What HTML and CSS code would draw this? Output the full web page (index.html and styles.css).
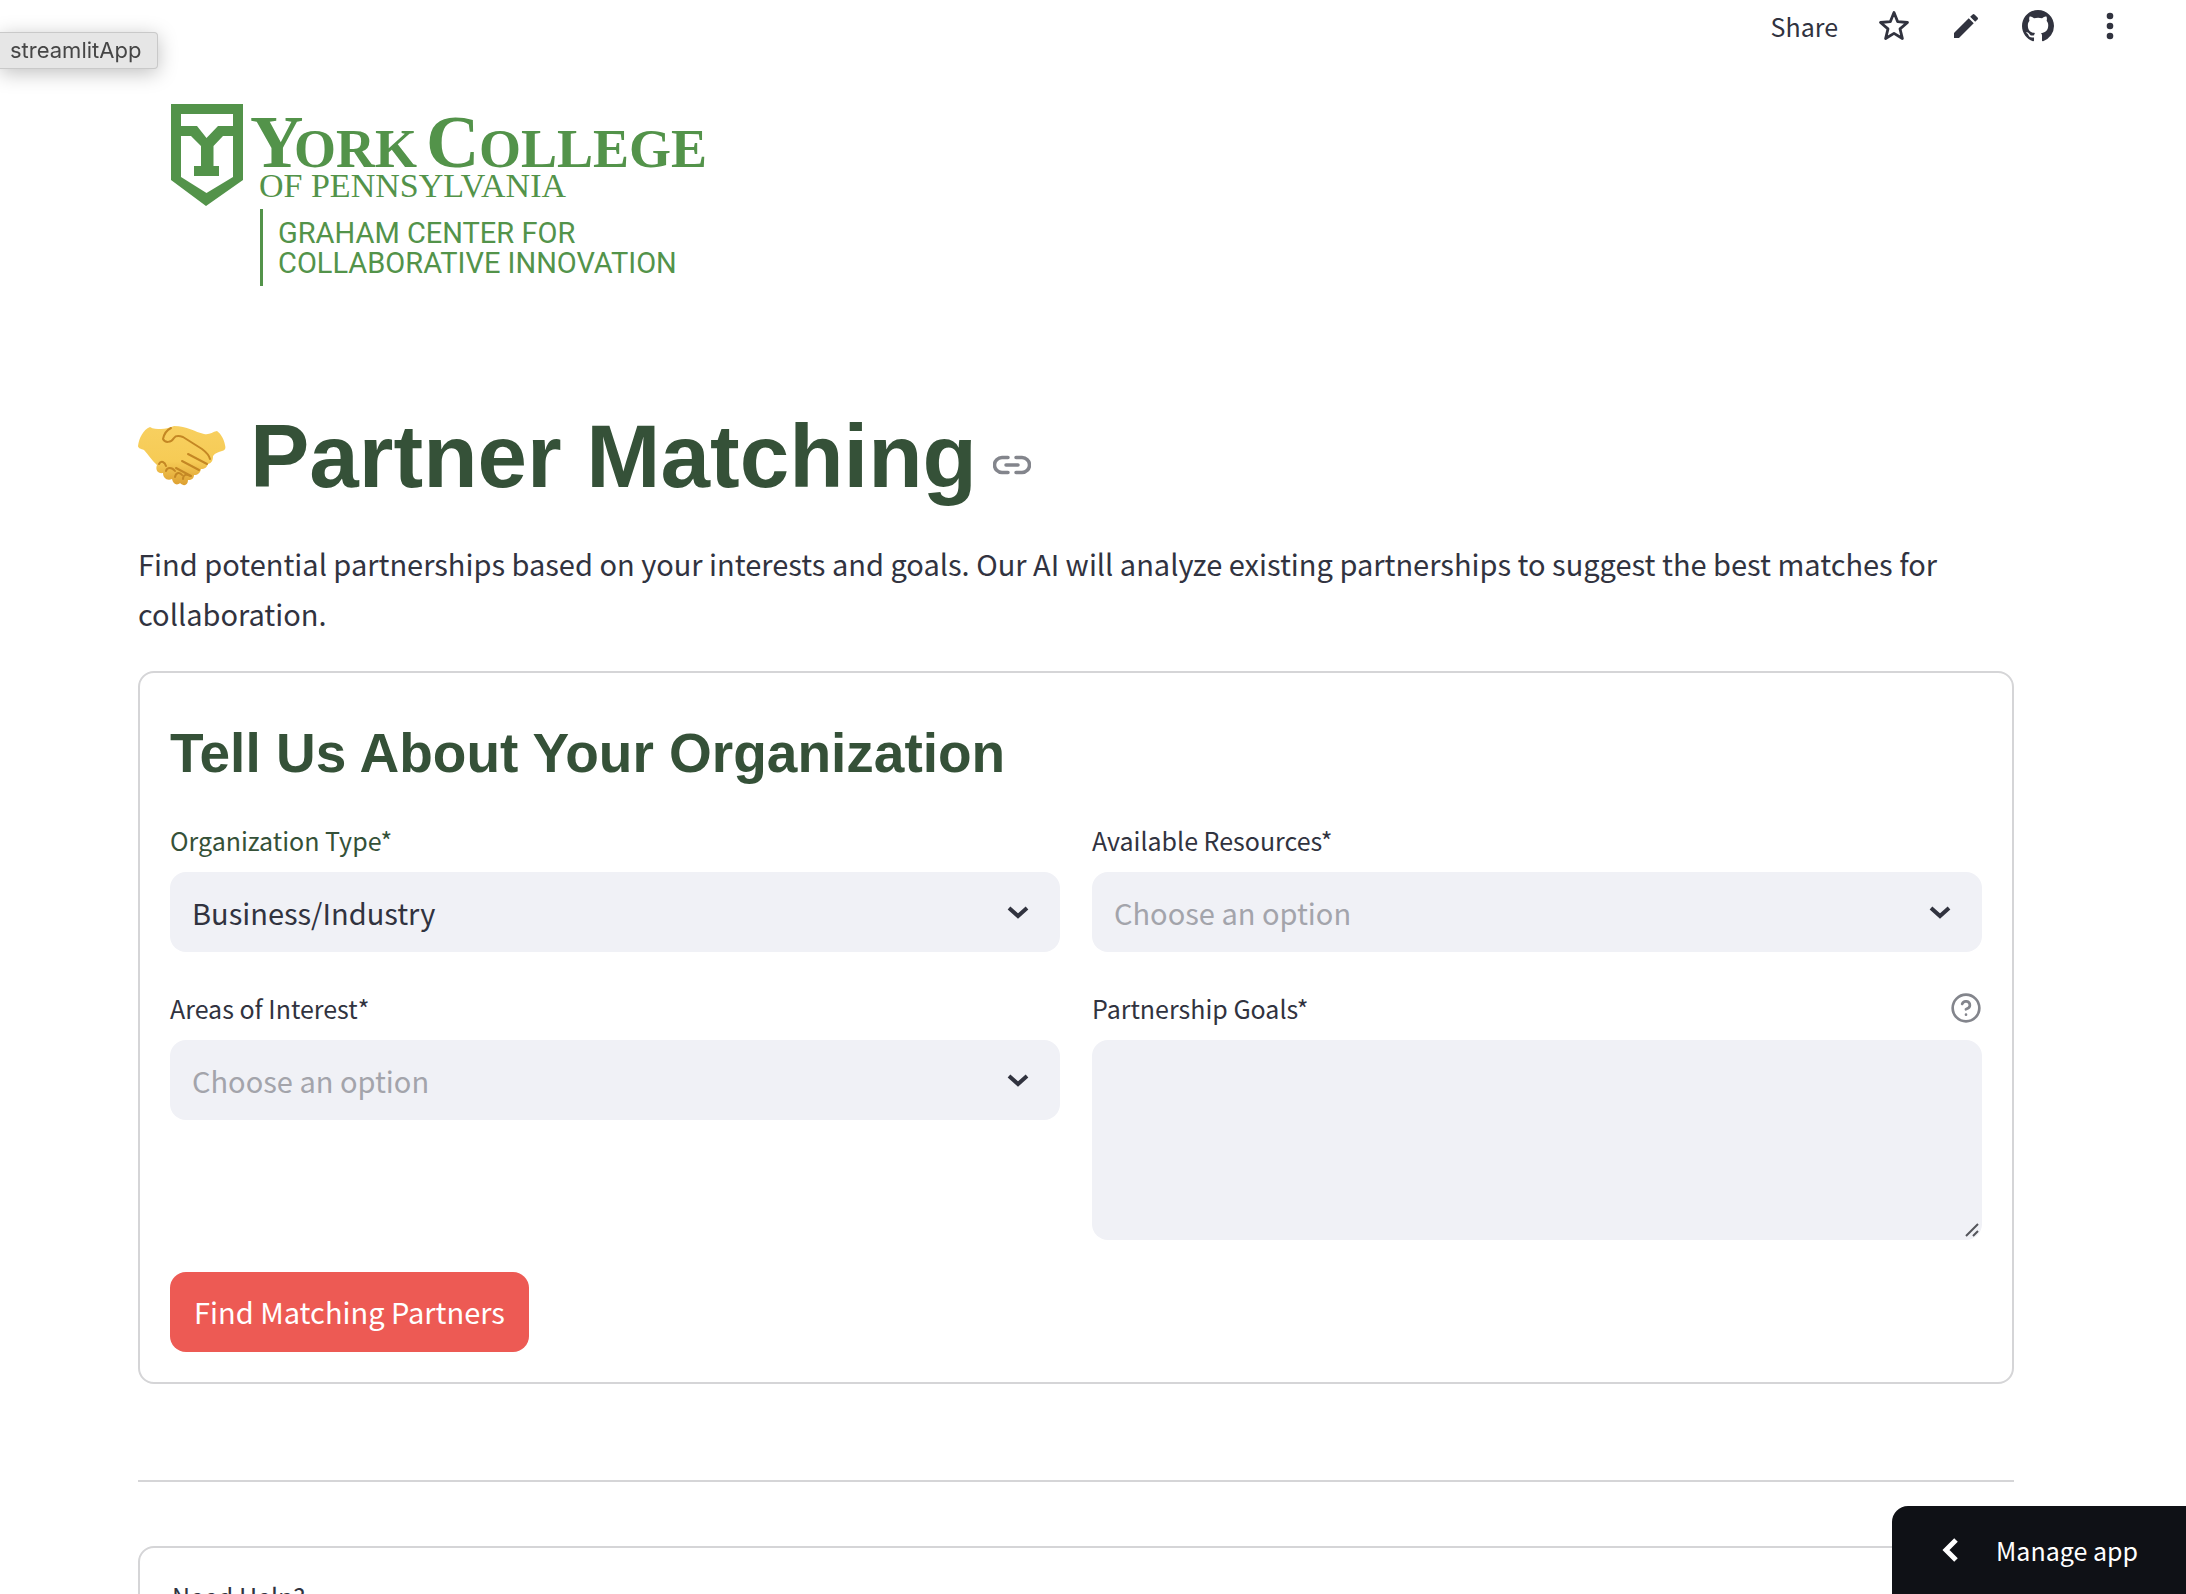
FILE: index.html
```html
<!DOCTYPE html>
<html lang="en">
<head>
<meta charset="utf-8">
<meta name="viewport" content="width=device-width, initial-scale=1">
<title>Partner Matching</title>
<link rel="stylesheet" href="styles.css">
</head>
<body>
<div class="app">
  <header class="toolbar">
    <button class="tool" type="button">Share</button>
    <button class="tool" type="button" aria-label="Favorite">
      <svg width="32" height="32" viewBox="0 0 32 32"><path d="M16 2.500 19.700 11.700 29.500 12.500 22 18.900 24.400 28.500 16 23.400 7.600 28.500 10 18.900 2.500 12.500 12.300 11.700Z" fill="none" stroke="currentColor" stroke-width="2.800" stroke-linejoin="round"/></svg>
    </button>
    <button class="tool" type="button" aria-label="Edit">
      <svg width="32" height="32" viewBox="0 0 24 24"><path d="M3 17.250V21h3.750L17.810 9.940l-3.750-3.750L3 17.250zM20.710 7.040a1 1 0 0 0 0-1.410l-2.340-2.340a1 1 0 0 0-1.410 0l-1.830 1.830 3.750 3.750 1.830-1.830z" fill="currentColor"/></svg>
    </button>
    <button class="tool" type="button" aria-label="View source">
      <svg width="32" height="32" viewBox="0 0 16 16"><path fill="currentColor" d="M8 0C3.580 0 0 3.580 0 8c0 3.540 2.290 6.530 5.470 7.590.4.070.55-.17.55-.38 0-.19-.01-.82-.01-1.490-2.010.37-2.530-.49-2.690-.94-.09-.23-.48-.94-.82-1.130-.28-.15-.68-.52-.01-.53.63-.01 1.080.58 1.230.82.72 1.210 1.870.87 2.330.66.07-.52.28-.87.51-1.070-1.780-.2-3.640-.89-3.640-3.950 0-.87.31-1.590.82-2.150-.08-.2-.36-1.020.08-2.120 0 0 .67-.21 2.200.82.64-.18 1.320-.27 2-.27s1.360.09 2 .27c1.530-1.040 2.200-.82 2.200-.82.44 1.100.16 1.920.08 2.120.51.56.82 1.270.82 2.150 0 3.070-1.870 3.750-3.650 3.950.29.25.54.73.54 1.480 0 1.070-.01 1.930-.01 2.200 0 .21.15.46.55.38A8.010 8.010 0 0 0 16 8c0-4.420-3.580-8-8-8z"/></svg>
    </button>
    <button class="tool" type="button" aria-label="Menu">
      <svg width="32" height="32" viewBox="0 0 32 32" fill="currentColor"><circle cx="16" cy="6" r="3.300"/><circle cx="16" cy="16" r="3.300"/><circle cx="16" cy="26" r="3.300"/></svg>
    </button>
  </header>

  <main class="content">
    <svg class="logo" width="560" height="184" viewBox="170 104 560 184" role="img" aria-label="York College of Pennsylvania, Graham Center for Collaborative Innovation">
      <path fill-rule="evenodd" d="M171 104H243V180L206 206 171 180ZM181 114V126H197L206.500 138 218 126H233V114ZM181 136V177L206.500 193 233 177V136H223L213.500 146V166H219V176H194V166H201V146L191 136Z"/>
      <text class="logo-serif" y="167"><tspan class="logo-cap" x="250">Y</tspan><tspan class="logo-small" x="294">ORK</tspan><tspan class="logo-cap" x="426">C</tspan><tspan class="logo-small" x="479">OLLEGE</tspan></text>
      <text class="logo-state" x="259" y="197">OF PENNSYLVANIA</text>
      <rect x="260" y="209" width="3" height="77"/>
      <text class="logo-center" x="278" y="243">GRAHAM CENTER FOR</text>
      <text class="logo-center" x="278" y="273">COLLABORATIVE INNOVATION</text>
    </svg>

    <h1 class="page-title" id="title">
      <svg width="88" height="60" viewBox="0 0 88 60" aria-hidden="true">
        <defs>
          <linearGradient id="skin" x1="0" y1="0" x2="0" y2="1"><stop offset="0" stop-color="#f8d060"/><stop offset=".6" stop-color="#f6cb55"/><stop offset="1" stop-color="#dda032"/></linearGradient>
        </defs>
        <path fill="url(#skin)" d="M12 1C5 4 1 12 0 20c0 2 3 3 6 4 4 4 8 11 13 15-2 5 1 9 6 8 0 5 4 8 9 6 1 5 5 7 8 4 4 4 8 2 8-3 4 0 6-2 6-5 4 0 6-2 7-6 4 0 6-2 7-5 4-1 5-4 5-8 2-3 6-4 9-5 3-1 4-2 3-6-1-6-4-11-8-14-5 1-7 4-13 3C57 6 49 0 36 0 31 2 27 3 23 3c-4 0-8 0-11-2Z"/>
        <path fill="none" stroke="#c48724" stroke-width="2" stroke-linecap="round" stroke-linejoin="round" d="M33 2c-4 2-7 6-8 11 2 4 8 4 11-1 2-3 6-2 9-1l19 12c4 3 7 6 8 10M50 28l19 10M44 35l17 9M38 42l15 8M21 38c2-4 6-2 7 2M28 45c1-4 6-4 9 0M37 51c1-5 5-5 7-2M45 53c0-5 4-5 7-3"/>
      </svg>
      <span>Partner Matching</span>
      <a class="anchor" href="#title" aria-label="Link to heading">
        <svg width="38" height="20" viewBox="0 0 38 20" fill="none" stroke="currentColor" stroke-width="3.500" stroke-linecap="round"><path d="M15 2.500H9a7.500 7.500 0 0 0 0 15h6M23 2.500h6a7.500 7.500 0 0 1 0 15h-6M13 10h12"/></svg>
      </a>
    </h1>

    <p class="intro">Find potential partnerships based on your interests and goals. Our AI will analyze existing partnerships to suggest the best matches for collaboration.</p>

    <form class="card">
      <h2 class="card-title">Tell Us About Your Organization</h2>
      <div class="fields">
        <div class="field">
          <div class="label-row"><label class="accent" for="org">Organization Type*</label></div>
          <div class="picker">
            <select id="org"><option>Business/Industry</option></select>
            <svg width="24" height="16" viewBox="0 0 24 16"><path d="M3 4l9 8 9-8"/></svg>
          </div>
        </div>
        <div class="field">
          <div class="label-row"><label for="resources">Available Resources*</label></div>
          <div class="picker">
            <select class="empty" id="resources"><option>Choose an option</option></select>
            <svg width="24" height="16" viewBox="0 0 24 16"><path d="M3 4l9 8 9-8"/></svg>
          </div>
        </div>
        <div class="field">
          <div class="label-row"><label for="areas">Areas of Interest*</label></div>
          <div class="picker">
            <select class="empty" id="areas"><option>Choose an option</option></select>
            <svg width="24" height="16" viewBox="0 0 24 16"><path d="M3 4l9 8 9-8"/></svg>
          </div>
        </div>
        <div class="field">
          <div class="label-row">
            <label for="goals">Partnership Goals*</label>
            <button class="help" type="button" aria-label="Help">
              <svg width="32" height="32" viewBox="0 0 24 24" fill="none" stroke="currentColor" stroke-width="2" stroke-linecap="round"><circle cx="12" cy="12" r="10"/><path d="M9.090 9a3 3 0 0 1 5.830 1c0 2-3 3-3 3M12 17h.01"/></svg>
            </button>
          </div>
          <div class="area">
            <textarea id="goals"></textarea>
            <svg width="16" height="16" viewBox="0 0 16 16"><path d="M2 14 14 2M9 14l5-5"/></svg>
          </div>
        </div>
      </div>
      <button class="submit" type="submit">Find Matching Partners</button>
    </form>

    <hr class="divider">

    <section class="card help-card"><p>Need Help?</p></section>
  </main>
</div>

<div class="status">streamlitApp</div>

<button class="manage" type="button">
  <svg width="16" height="24" viewBox="0 0 16 24"><path d="M14 2 4 12l10 10"/></svg>
  Manage app
</button>
</body>
</html>
```
FILE: styles.css
```css
* {
  box-sizing: border-box;
}

body {
  margin: 0;
  background: #fff;
  color: #31333f;
  font-family: "Noto Sans CJK SC", "Open Sans", sans-serif;
  font-size: 29px;
  line-height: 50px;
}

button,
select,
textarea {
  margin: 0;
  border: 0;
  color: inherit;
  font: inherit;
}

svg {
  display: block;
  flex: none;
}

.app {
  height: 100vh;
  overflow: auto;
  scrollbar-width: none;
}

.toolbar {
  display: flex;
  align-items: center;
  justify-content: flex-end;
  gap: 40px;
  height: 52px;
  padding-right: 60px;
}

.tool {
  padding: 0;
  background: none;
  font-size: 25px;
  line-height: 40px;
}

.content {
  padding: 52px 172px 64px 138px;
}

.logo {
  margin-left: 32px;
  fill: #53934a;
}

.logo-serif,
.logo-state {
  font-family: "Liberation Serif", serif;
}

.logo-serif {
  font-weight: 700;
}

.logo-cap {
  font-size: 74px;
}

.logo-small {
  font-size: 54px;
}

.logo-state {
  font-size: 34px;
}

.logo-center {
  font-family: Roboto, sans-serif;
  font-size: 29px;
}

.page-title {
  display: flex;
  align-items: center;
  gap: 16px;
  margin: 114px 0 28px;
  color: #355138;
  font: 700 89px/108px "Liberation Sans", sans-serif;
}

.page-title span {
  margin-left: 8px;
}

.anchor {
  margin-top: 18px;
  color: #83858c;
}

.intro {
  margin: 0 0 33px;
}

.card {
  padding: 30px;
  border: 2px solid #d5d5d7;
  border-radius: 16px;
}

.card-title {
  margin: 16px 0 33px;
  color: #355138;
  font: 700 55px/68px "Liberation Sans", sans-serif;
}

.fields {
  display: grid;
  grid-template-columns: 1fr 1fr;
  gap: 36px 32px;
}

.label-row {
  display: flex;
  align-items: center;
  justify-content: space-between;
  height: 40px;
  margin-bottom: 12px;
  font-size: 25px;
  line-height: 40px;
}

.accent {
  color: #355138;
}

.help {
  padding: 0;
  background: none;
  color: #83858c;
}

.picker,
.area {
  display: grid;
}

.picker > *,
.area > * {
  grid-area: 1 / 1;
}

.picker select {
  appearance: none;
  width: 100%;
  height: 80px;
  padding: 0 72px 0 22px;
  border-radius: 16px;
  background: #f0f1f6;
}

.picker .empty {
  color: #a3a4ab;
}

.picker svg,
.area svg {
  fill: none;
  pointer-events: none;
}

.picker svg {
  place-self: center end;
  margin-right: 30px;
  stroke: #31333f;
  stroke-width: 4;
}

.area textarea {
  width: 100%;
  height: 200px;
  padding: 16px 22px;
  border-radius: 16px;
  background: #f0f1f6;
  resize: none;
}

.area svg {
  place-self: end;
  margin: 2px;
  stroke: #55565c;
  stroke-width: 2;
}

.submit {
  height: 80px;
  margin-top: 32px;
  padding: 0 24px 2px;
  border-radius: 16px;
  background: #ed5a54;
  color: #fff;
}

.divider {
  height: 2px;
  margin: 96px 0 64px;
  border: 0;
  background: #d5d5d7;
}

.help-card {
  padding: 28px 32px;
}

.help-card p {
  margin: 0;
  font-size: 25px;
  line-height: 40px;
}

.status {
  position: fixed;
  top: 32px;
  left: 0;
  padding: 0 16px 0 10px;
  border: 1px solid #c9c9c9;
  border-left: 0;
  border-radius: 0 4px 4px 0;
  background: #e6e6e6;
  box-shadow: 0 4px 20px rgba(0, 0, 0, .25);
  color: #464646;
  font: 22px/35px Inter, sans-serif;
}

.manage {
  position: fixed;
  right: 0;
  bottom: 0;
  display: flex;
  align-items: center;
  gap: 38px;
  height: 88px;
  padding: 0 48px 0 50px;
  border-radius: 16px 0 0 0;
  background: #0f1116;
  color: #fff;
  font-size: 25px;
}

.manage svg {
  fill: none;
  stroke: currentColor;
  stroke-width: 5;
}
```
